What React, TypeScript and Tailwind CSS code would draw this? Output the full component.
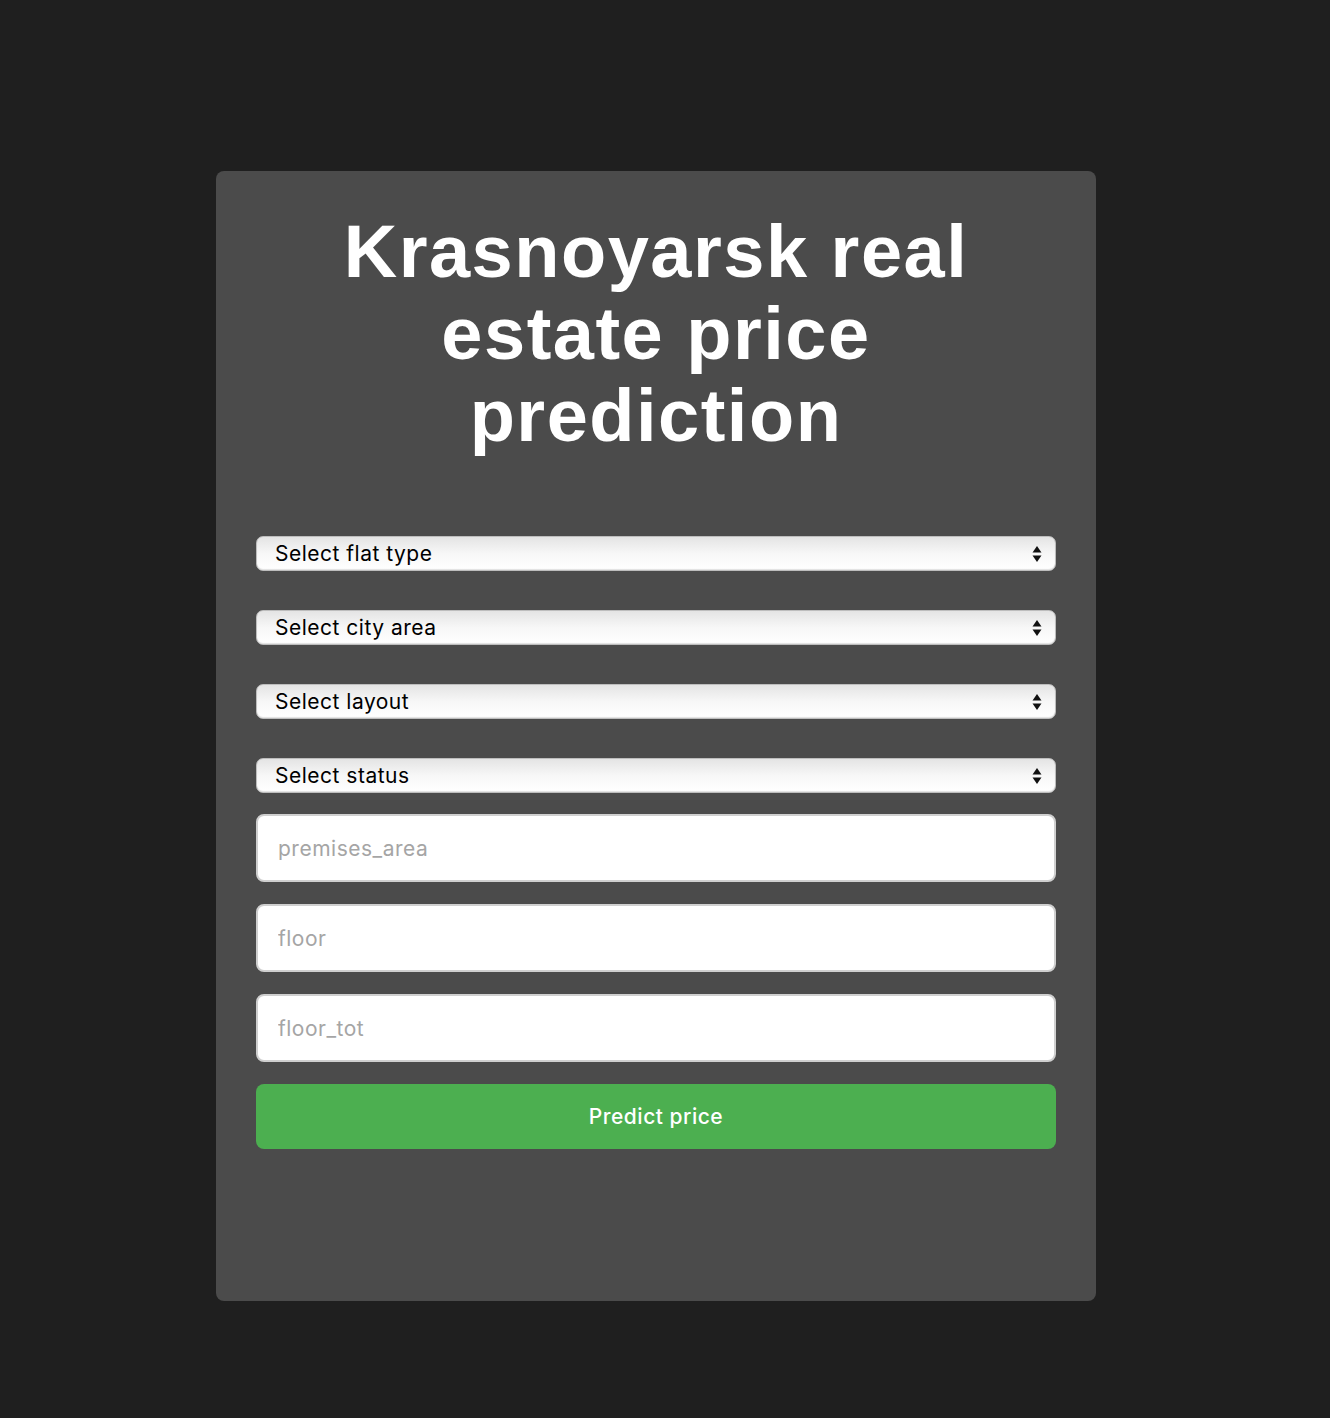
import React from "react";

const selects = ["Select flat type", "Select city area", "Select layout", "Select status"];
const inputs = ["premises_area", "floor", "floor_tot"];

function Arrows() {
  return (
    <svg width="10" height="18" viewBox="0 0 10 18" className="pointer-events-none absolute right-[14px] top-1/2 -translate-y-1/2">
      <path d="M5 1 L9.5 7.5 L0.5 7.5 Z" fill="#111" />
      <path d="M5 17 L9.5 10.5 L0.5 10.5 Z" fill="#111" />
    </svg>
  );
}

export default function App() {
  return (
    <div className="min-h-[1418px] w-full bg-[#1f1f1f] pt-[171px] font-['Inter','Noto_Sans',sans-serif]">
      <div className="ml-[216px] flex h-[1130px] w-[880px] flex-col rounded-lg bg-[#4b4b4b] px-10 pt-10">
        <h1 className="text-center font-['Liberation_Sans',Arial,sans-serif] text-[74px] font-bold leading-[82px] tracking-[1.5px] text-white">
          Krasnoyarsk real
          <br />
          estate price
          <br />
          prediction
        </h1>

        <form className="mt-[79px] flex flex-col" onSubmit={(e) => e.preventDefault()}>
          <div className="flex flex-col gap-[39px]">
            {selects.map((label) => (
              <div key={label} className="relative">
                <select
                  defaultValue=""
                  className="h-[35px] w-full appearance-none rounded-[7px] border border-[#bdbdbd] bg-gradient-to-b from-[#e4e4e4] via-[#f7f7f7] to-[#ffffff] pl-[18px] text-[21px] tracking-[0.5px] text-black shadow-[inset_0_-1px_1px_rgba(0,0,0,0.12)] outline-none"
                >
                  <option value="" disabled>
                    {label}
                  </option>
                </select>
                <Arrows />
              </div>
            ))}
          </div>

          <div className="mt-[21px] flex flex-col gap-[22px]">
            {inputs.map((p) => (
              <input
                key={p}
                placeholder={p}
                className="h-[68px] w-full rounded-lg border-2 border-[#cfcfcf] bg-white px-[20px] text-[21px] tracking-[0.5px] text-black outline-none placeholder:text-[#a5a5a5]"
              />
            ))}
            <button
              type="submit"
              className="h-[65px] w-full rounded-lg bg-[#4caf50] text-[21px] font-medium tracking-[0.5px] text-white"
            >
              Predict price
            </button>
          </div>
        </form>
      </div>
    </div>
  );
}
